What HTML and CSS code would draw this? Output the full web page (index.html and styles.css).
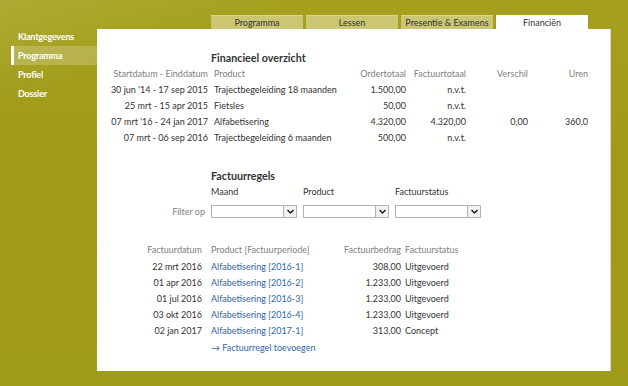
FILE: index.html
```html
<!DOCTYPE html>
<html lang="nl">
<head>
<meta charset="utf-8">
<title>Financiën</title>
<link rel="stylesheet" href="styles.css">
</head>
<body>
<div class="page">
  <nav class="side">
    <a class="side-item">Klantgegevens</a>
    <a class="side-item active">Programma</a>
    <a class="side-item">Profiel</a>
    <a class="side-item">Dossier</a>
  </nav>
  <div class="main">
    <div class="tabs">
      <div class="tab">Programma</div>
      <div class="tab">Lessen</div>
      <div class="tab">Presentie &amp; Examens</div>
      <div class="tab active">Financiën</div>
    </div>
    <div class="panel">
      <h2 class="title t1">Financieel overzicht</h2>
      <div class="grid1">
        <div class="hd r">Startdatum - Einddatum</div><div class="hd l">Product</div><div class="hd r">Ordertotaal</div><div class="hd r">Factuurtotaal</div><div class="hd r">Verschil</div><div class="hd r">Uren</div>
        <div class="r">30 jun '14 - 17 sep 2015</div><div class="l">Trajectbegeleiding 18 maanden</div><div class="r">1.500,00</div><div class="r">n.v.t.</div><div class="r"></div><div class="r"></div>
        <div class="r">25 mrt - 15 apr 2015</div><div class="l">Fietsles</div><div class="r">50,00</div><div class="r">n.v.t.</div><div class="r"></div><div class="r"></div>
        <div class="r">07 mrt '16 - 24 jan 2017</div><div class="l">Alfabetisering</div><div class="r">4.320,00</div><div class="r">4.320,00</div><div class="r">0,00</div><div class="r">360,0</div>
        <div class="r">07 mrt - 06 sep 2016</div><div class="l">Trajectbegeleiding 6 maanden</div><div class="r">500,00</div><div class="r">n.v.t.</div><div class="r"></div><div class="r"></div>
      </div>

      <h2 class="title t2">Factuurregels</h2>
      <div class="filter">
        <div></div><div class="flabel">Maand</div><div class="flabel">Product</div><div class="flabel">Factuurstatus</div>
        <div class="hd r fop">Filter op</div>
        <div class="select"><span class="arrow"><svg width="9" height="7" viewBox="0 0 9 7"><path d="M1.5 2 L4.5 5 L7.5 2" fill="none" stroke="#222" stroke-width="1.5"/></svg></span></div>
        <div class="select"><span class="arrow"><svg width="9" height="7" viewBox="0 0 9 7"><path d="M1.5 2 L4.5 5 L7.5 2" fill="none" stroke="#222" stroke-width="1.5"/></svg></span></div>
        <div class="select"><span class="arrow"><svg width="9" height="7" viewBox="0 0 9 7"><path d="M1.5 2 L4.5 5 L7.5 2" fill="none" stroke="#222" stroke-width="1.5"/></svg></span></div>
      </div>

      <div class="grid2">
        <div class="hd r">Factuurdatum</div><div class="hd l">Product [Factuurperiode]</div><div class="hd r">Factuurbedrag</div><div class="hd s">Factuurstatus</div>
        <div class="r">22 mrt 2016</div><div class="l"><a class="link">Alfabetisering [2016-1]</a></div><div class="r">308,00</div><div class="s">Uitgevoerd</div>
        <div class="r">01 apr 2016</div><div class="l"><a class="link">Alfabetisering [2016-2]</a></div><div class="r">1.233,00</div><div class="s">Uitgevoerd</div>
        <div class="r">01 jul 2016</div><div class="l"><a class="link">Alfabetisering [2016-3]</a></div><div class="r">1.233,00</div><div class="s">Uitgevoerd</div>
        <div class="r">03 okt 2016</div><div class="l"><a class="link">Alfabetisering [2016-4]</a></div><div class="r">1.233,00</div><div class="s">Uitgevoerd</div>
        <div class="r">02 jan 2017</div><div class="l"><a class="link">Alfabetisering [2017-1]</a></div><div class="r">313,00</div><div class="s">Concept</div>
      </div>
      <a class="link add">&rarr; Factuurregel toevoegen</a>
    </div>
  </div>
</div>
</body>
</html>
```
FILE: styles.css
```css
* { box-sizing: border-box; }
html, body { margin: 0; padding: 0; }
body {
  width: 628px;
  height: 386px;
  overflow: hidden;
  font-family: Lato, "Liberation Sans", sans-serif;
  font-size: 9px;
  color: #333;
  background:
    linear-gradient(160deg, rgba(255,255,240,0.10) 0%, rgba(255,255,255,0) 18%),
    linear-gradient(180deg, #a6a01e 0%, #a09a18 40%, #a19b1a 100%);
}
.page { display: flex; height: 386px; }
.side {
  width: 97px;
  flex: none;
  padding-top: 27px;
  display: flex;
  flex-direction: column;
}
.side-item {
  display: block;
  margin-left: 11px;
  height: 19px;
  line-height: 19px;
  padding-left: 4px;
  border-left: 3px solid transparent;
  color: #fff;
  font-weight: 700;
  font-size: 9px;
  letter-spacing: -0.2px;
}
.side-item.active {
  border-left-color: #fff;
  background: rgba(255,255,255,0.2);
}
.main { flex: none; width: 514px; padding-top: 15px; }
.tabs { display: flex; gap: 3px; padding-left: 114px; height: 14px; }
.tab {
  width: 92px;
  height: 14px;
  text-align: center;
  white-space: nowrap;
  background: #cbc672;
  border-top: 1px solid #d9d58c;
  line-height: 13px;
  color: #333;
  font-size: 9px;
}
.tab.active { background: #fff; border-top-color: #fff; }
.panel {
  background: #fff;
  height: 342px;
  border-right: 1px solid #d8d8c8;
}
.title {
  margin: 0;
  font-size: 10.7px;
  font-weight: 700;
  line-height: 16px;
  padding-left: 114px;
  color: #333;
}
.t1 { padding-top: 21px; }
.t2 { margin-top: 22px; }
.hd { color: #808080; }
.r { text-align: right; white-space: nowrap; }
.l { white-space: nowrap; }
.grid1 {
  display: grid;
  grid-template-columns: 111px 136px 62px 60px 62px 60px;
  grid-auto-rows: 16px;
  line-height: 16px;
}
.grid1 .l { padding-left: 6px; }
.grid1 > .hd { margin-bottom: 1px; }
.filter {
  display: grid;
  grid-template-columns: 108px 86px 86px 86px;
  column-gap: 6px;
  grid-template-rows: 18px 19px;
  line-height: 16px;
  align-items: center;
}
.flabel { color: #333; align-self: start; }
.select {
  position: relative;
  height: 13px;
  border: 1px solid #b4b4b4;
  background: #fff;
}
.arrow {
  position: absolute;
  right: 0;
  top: 0;
  width: 13px;
  height: 11px;
  border-left: 1px solid #b4b4b4;
  background: #f2f2f2;
  display: flex;
  align-items: center;
  justify-content: center;
}
.grid2 {
  margin-top: 21px;
  display: grid;
  grid-template-columns: 105px 138px 61px 120px;
  grid-template-rows: 17px repeat(5, 16px);
  line-height: 16px;
}
.grid2 .l { padding-left: 9px; }
.grid2 .s { padding-left: 4px; }
.link { color: #2f65a8; text-decoration: none; }
.add { display: block; padding-left: 114px; line-height: 16px; margin-top: 1px; }
```
